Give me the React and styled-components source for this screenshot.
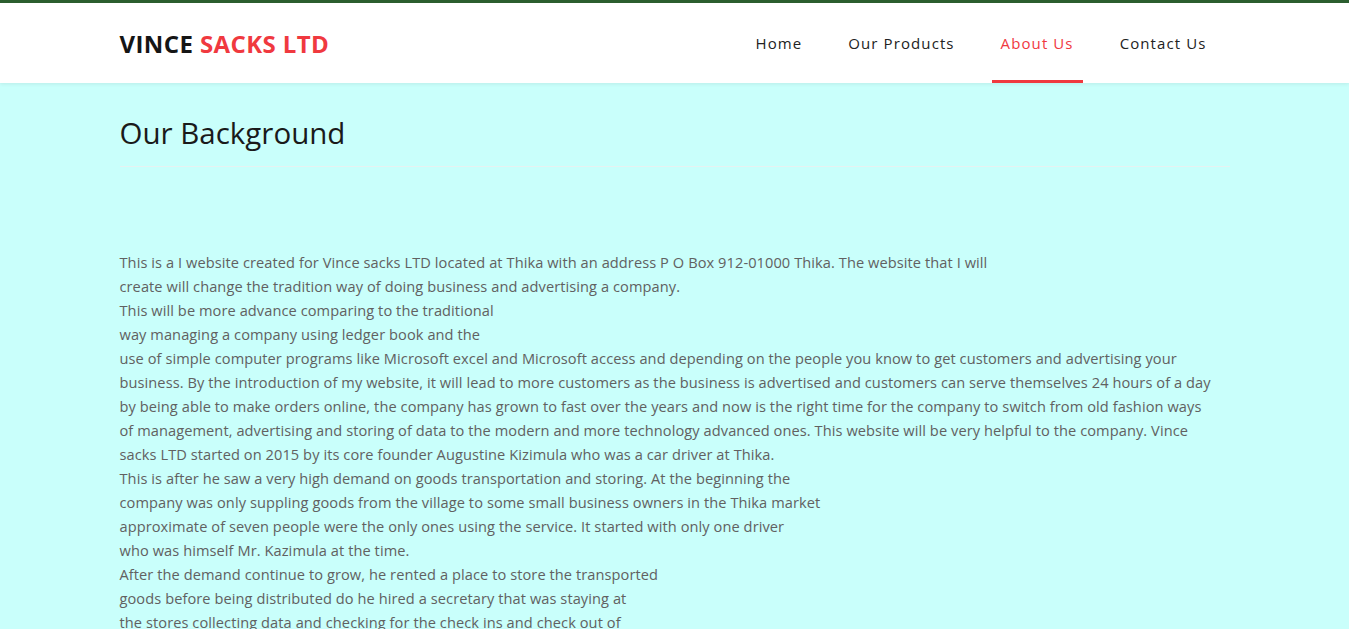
import React from 'react';
import styled, { createGlobalStyle } from 'styled-components';

const GlobalStyle = createGlobalStyle`
  html, body {
    margin: 0;
    padding: 0;
    background: #c9fffb;
    font-family: "Open Sans", "Liberation Sans", sans-serif;
  }
  * { box-sizing: border-box; }
`;

const Page = styled.div`
  min-height: 100vh;
  background: #c9fffb;
`;

const Header = styled.header`
  background: #fff;
  border-top: 3px solid #2b5e2f;
  box-shadow: 0 1px 4px rgba(0, 0, 0, 0.08);
`;

const Container = styled.div`
  width: 1110px;
  margin: 0 auto;
`;

const NavBar = styled(Container)`
  height: 80px;
  display: flex;
  align-items: center;
  justify-content: space-between;
`;

const Brand = styled.div`
  font-size: 24px;
  font-weight: 700;
  color: #151515;
  letter-spacing: 0.4px;
  span { color: #f0393f; }
`;

const Menu = styled.nav`
  display: flex;
  height: 100%;
`;

const MenuLink = styled.a`
  position: relative;
  display: flex;
  align-items: center;
  height: 100%;
  padding: 0 23px;
  font-size: 15px;
  color: ${p => (p.$active ? '#f0393f' : '#222')};
  text-decoration: none;
  letter-spacing: 1.1px;
  &::after {
    content: '';
    display: ${p => (p.$active ? 'block' : 'none')};
    position: absolute;
    left: 14px;
    right: 14px;
    bottom: 0;
    height: 3px;
    background: #f0393f;
  }
`;

const Title = styled.h2`
  margin: 0;
  padding-top: 34px;
  font-size: 29.5px;
  font-weight: 400;
  color: #1a1a1a;
  line-height: 32px;
`;

const Divider = styled.hr`
  margin: 17px 0 0;
  border: 0;
  border-top: 1px solid #e6f2f1;
`;

const Body = styled.p`
  margin: 83px 0 0;
  font-size: 14.6px;
  font-weight: 400;
  line-height: 24px;
  letter-spacing: 0.08px;
  color: #616161;
  white-space: nowrap;
`;

const lines = [
  'This is a I website created for Vince sacks LTD located at Thika with an address P O Box 912-01000 Thika. The website that I will',
  'create will change the tradition way of doing business and advertising a company.',
  'This will be more advance comparing to the traditional',
  'way managing a company using ledger book and the',
  'use of simple computer programs like Microsoft excel and Microsoft access and depending on the people you know to get customers and advertising your',
  'business. By the introduction of my website, it will lead to more customers as the business is advertised and customers can serve themselves 24 hours of a day',
  'by being able to make orders online, the company has grown to fast over the years and now is the right time for the company to switch from old fashion ways',
  'of management, advertising and storing of data to the modern and more technology advanced ones. This website will be very helpful to the company. Vince',
  'sacks LTD started on 2015 by its core founder Augustine Kizimula who was a car driver at Thika.',
  'This is after he saw a very high demand on goods transportation and storing. At the beginning the',
  'company was only suppling goods from the village to some small business owners in the Thika market',
  'approximate of seven people were the only ones using the service. It started with only one driver',
  'who was himself Mr. Kazimula at the time.',
  'After the demand continue to grow, he rented a place to store the transported',
  'goods before being distributed do he hired a secretary that was staying at',
  'the stores collecting data and checking for the check ins and check out of',
];

export default function App() {
  return (
    <Page>
      <GlobalStyle />
      <Header>
        <NavBar>
          <Brand>VINCE <span>SACKS LTD</span></Brand>
          <Menu>
            <MenuLink href="#">Home</MenuLink>
            <MenuLink href="#">Our Products</MenuLink>
            <MenuLink href="#" $active>About Us</MenuLink>
            <MenuLink href="#">Contact Us</MenuLink>
          </Menu>
        </NavBar>
      </Header>
      <Container>
        <Title>Our Background</Title>
        <Divider />
        <Body>
          {lines.map((l, i) => (
            <React.Fragment key={i}>{l}<br /></React.Fragment>
          ))}
        </Body>
      </Container>
    </Page>
  );
}
